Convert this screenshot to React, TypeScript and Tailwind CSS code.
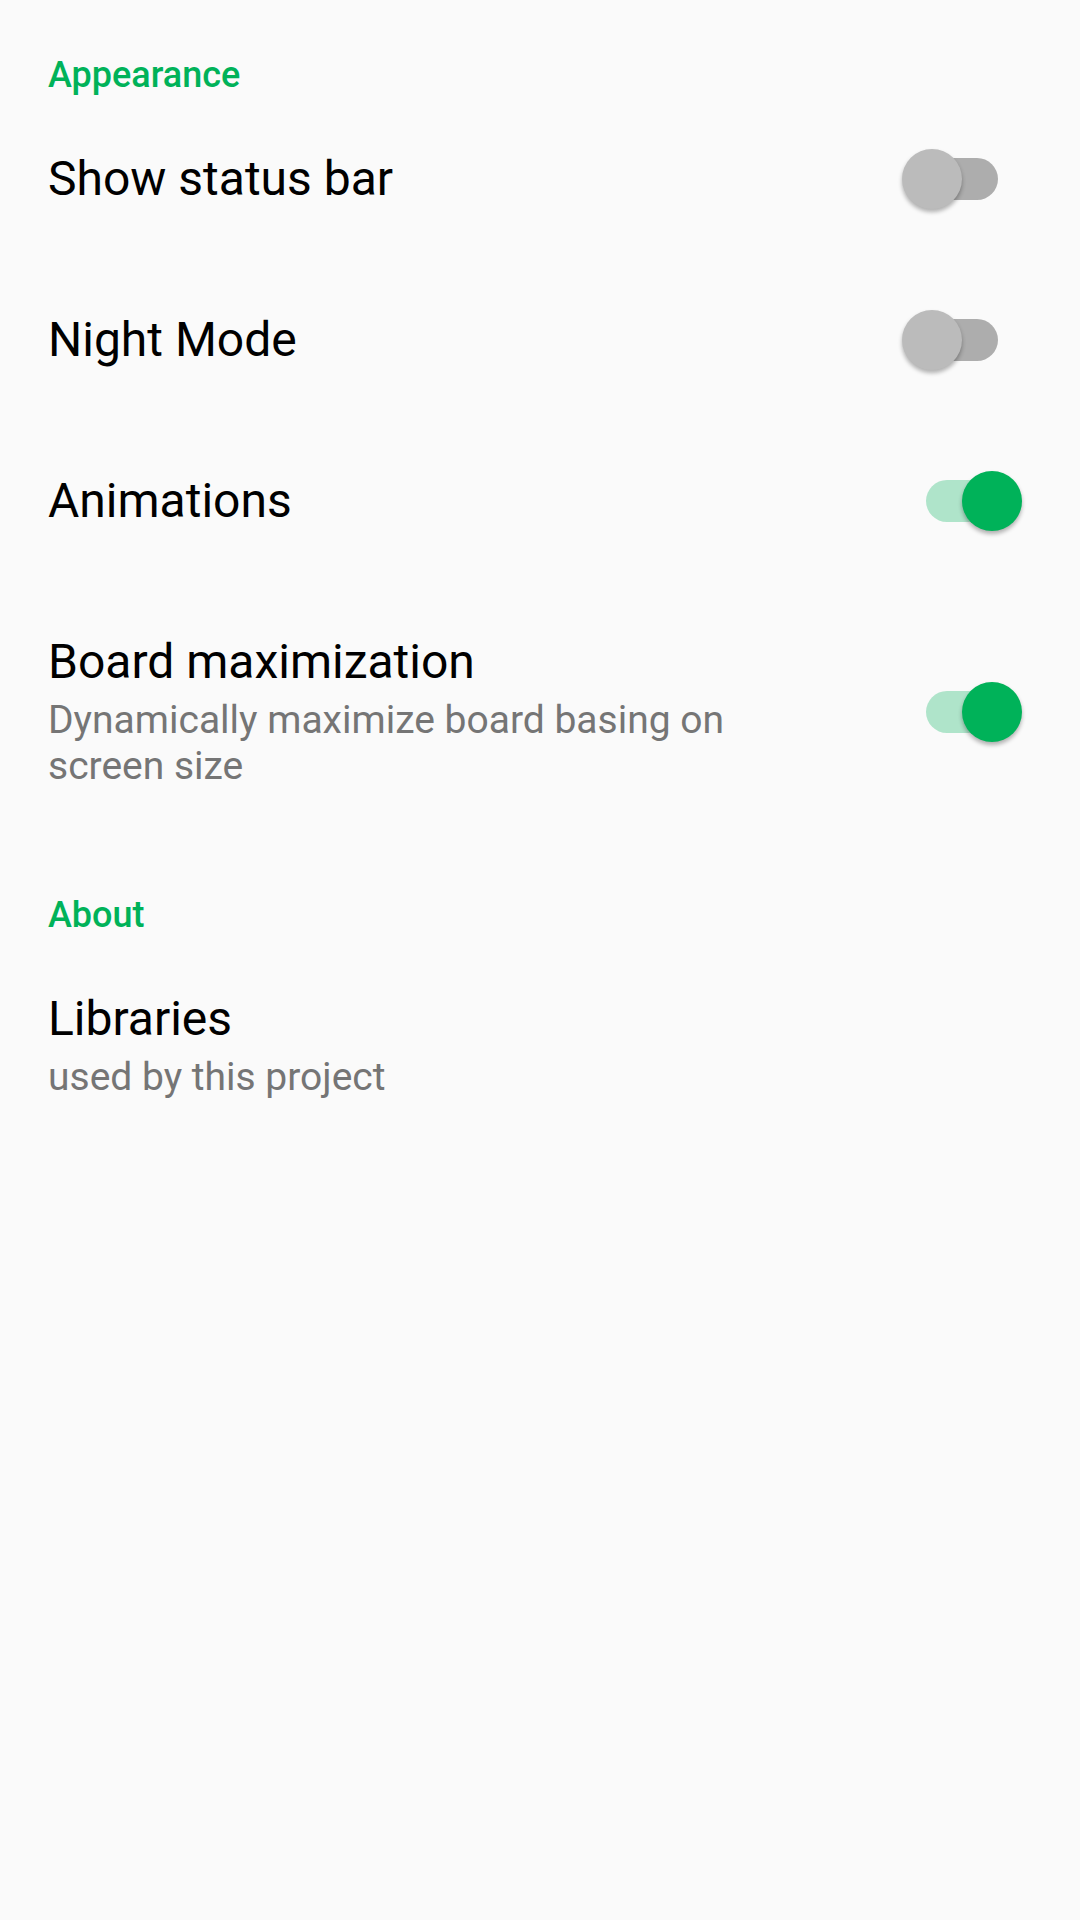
import React from 'react';

function Category({ title }: { title: string }) {
  return (
    <div className="pl-[48px] pt-[53px]">
      <h2 className="text-[36px] leading-[44px] font-medium text-[#00b259]">{title}</h2>
    </div>
  );
}

function Toggle({ on }: { on: boolean }) {
  return (
    <div className="relative w-[120px] h-[60px] -my-[2px] shrink-0">
      <div
        className={
          on
            ? 'absolute left-[24px] top-[9px] w-[72px] h-[42px] rounded-full bg-[#afe4ca]'
            : 'absolute left-[24px] top-[9px] w-[72px] h-[42px] rounded-full bg-[#adadad]'
        }
      />
      <div
        className={
          on
            ? 'absolute right-0 top-0 w-[60px] h-[60px] rounded-full bg-[#00b259] shadow-[0_3px_4px_rgba(0,0,0,0.3)]'
            : 'absolute left-0 top-0 w-[60px] h-[60px] rounded-full bg-[#bbbbbb] shadow-[0_3px_4px_rgba(0,0,0,0.3)]'
        }
      />
    </div>
  );
}

function Pref({ title, summary, toggle }: { title: string; summary?: string; toggle?: boolean }) {
  return (
    <div className="flex items-center pl-[48px] pr-[58px] pt-[54px] pb-[51px]">
      <div className="flex-1 pr-[100px] flex flex-col gap-[7px]">
        <div className="text-[48px] leading-[56px] text-black">{title}</div>
        {summary && <div className="text-[39px] leading-[46px] text-[#757575]">{summary}</div>}
      </div>
      {toggle !== undefined && <Toggle on={toggle} />}
    </div>
  );
}

export default function App() {
  return (
    <div className="w-[1080px] h-[1920px] bg-[#fafafa] font-['Roboto',sans-serif]">
      <Category title="Appearance" />
      <Pref title="Show status bar" toggle={false} />
      <Pref title="Night Mode" toggle={false} />
      <Pref title="Animations" toggle={true} />
      <Pref
        title="Board maximization"
        summary="Dynamically maximize board basing on screen size"
        toggle={true}
      />
      <Category title="About" />
      <Pref title="Libraries" summary="used by this project" />
    </div>
  );
}
